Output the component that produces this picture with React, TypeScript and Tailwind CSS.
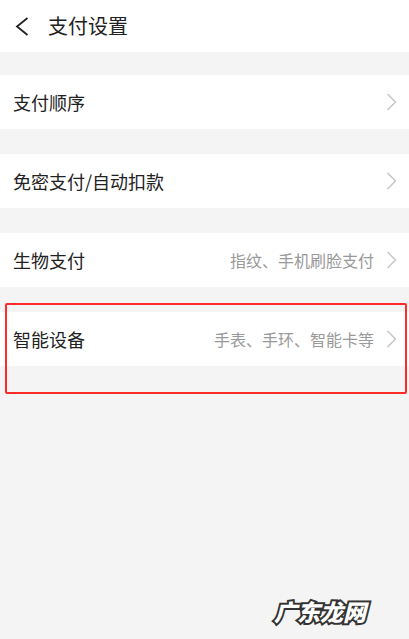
type RowProps = {
	label: string;
	hint?: string;
};

function Arrow() {
	return (
		<svg width="11" height="18" viewBox="0 0 11 18" fill="none" className="shrink-0">
			<polyline points="1.5,1 9.5,9 1.5,17" stroke="#c6c6c6" strokeWidth="1.5" strokeLinejoin="miter" />
		</svg>
	);
}

function Row({ label, hint }: RowProps) {
	return (
		<div className="flex h-[54px] items-center bg-white pl-[13px] pr-[12px]">
			<span className="flex-1 text-[18px] text-[#222]">{label}</span>
			{hint && <span className="mr-[12px] text-[16px] text-[#999]">{hint}</span>}
			<Arrow />
		</div>
	);
}

export default function App() {
	return (
		<div
			className="relative h-[639px] w-full overflow-hidden bg-[#f4f4f4]"
			style={{ fontFamily: '"Noto Sans CJK SC", "Noto Sans", sans-serif' }}
		>
			<div className="flex h-[52px] items-center bg-white pl-[15px]">
				<svg width="14" height="19" viewBox="0 0 14 19" fill="none">
					<polyline points="12.5,1 2,9.5 12.5,18" stroke="#222" strokeWidth="1.8" />
				</svg>
				<span className="ml-[19px] text-[20px] text-[#222]">支付设置</span>
			</div>

			<div className="mt-[23px] flex flex-col gap-[25px]">
				<Row label="支付顺序" />
				<Row label="免密支付/自动扣款" />
				<Row label="生物支付" hint="指纹、手机刷脸支付" />
				<Row label="智能设备" hint="手表、手环、智能卡等" />
			</div>

			{/* annotation box */}
			<div className="absolute left-[5px] top-[303px] h-[91px] w-[402px] rounded-[2px] border-2 border-[#ff2a2a]" />

			{/* watermark */}
			<div className="absolute left-[274px] top-[594px] text-[23px] font-black italic text-white [-webkit-text-stroke:4px_#333] [paint-order:stroke_fill]">
				广东龙网
			</div>
		</div>
	);
}
